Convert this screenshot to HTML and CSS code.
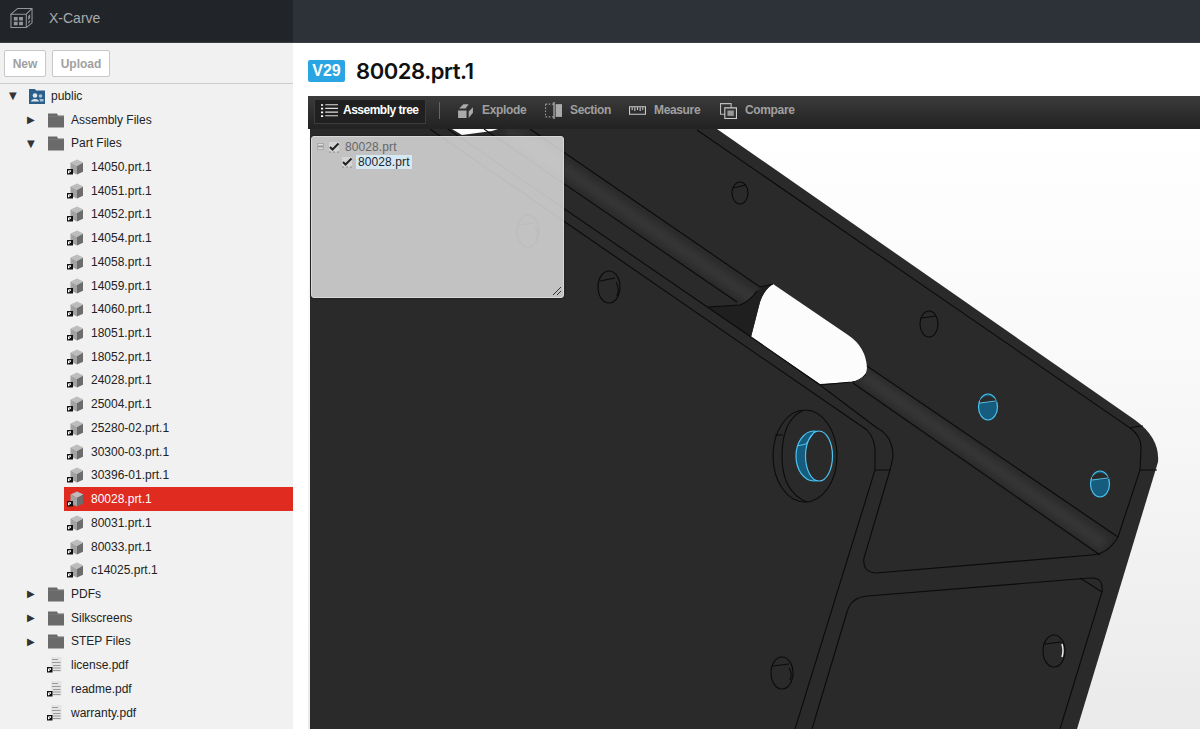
FILE: index.html
```html
<!DOCTYPE html>
<html lang="en">
<head>
<meta charset="UTF-8">
<meta name="viewport" content="width=device-width, initial-scale=1.0">
<title>X-Carve — 80028.prt.1</title>
<link rel="stylesheet" href="styles.css">
</head>
<body>
  <svg class="defs" width="0" height="0">
    <symbol id="part" viewBox="0 0 16 16">
      <path d="M3.500 3.500 10 .5 16.500 3.500 10 7Z" fill="#bdbdbd"/>
      <path d="M3.500 3.500 10 7V15.500L3.500 12.500Z" fill="#a2a2a2"/>
      <path d="M16.500 3.500 10 7V15.500L16.500 12.500Z" fill="#6c6c6c"/>
      <path d="M0 10H6V15.500H0Z" fill="#111"/>
      <path d="M1.500 14V11.800H4M1.500 14 4 11.800" fill="none" stroke="#fff"/>
    </symbol>
    <symbol id="folder" viewBox="0 0 16 16">
      <path d="M0 1.500H9L10 3.500H16V15.500H0Z" fill="#6a6a6a"/>
      <path d="M0 4.500H16V5H0Z" fill="#808080"/>
    </symbol>
    <symbol id="doc" viewBox="0 0 16 16">
      <path d="M4 0H14.500V15H4Z" fill="#e4e4e4"/>
      <path d="M5 2.500H11M5 5.500H13.500M6 8.500H13.500M6 11H13.500M6 13.500H13.500" stroke="#9a9a9a" stroke-width="1.200"/>
      <path d="M0 10H5.500V15.500H0Z" fill="#111"/>
      <path d="M1.500 14V11.800H4M1.500 14 4 11.800" fill="none" stroke="#fff"/>
    </symbol>
    <symbol id="tick" viewBox="0 0 12 12">
      <path d="M1 1H11V11H1Z" fill="#e6e6e6" opacity=".55"/>
      <path d="M1 11H3M5 11H7M9 11H11" stroke="#888"/>
      <path d="M2 6 4.500 8.500 10.500 2.500" fill="none" stroke="#222" stroke-width="2"/>
    </symbol>
  </svg>

  <header class="topbar">
    <div class="brand">
      <svg class="brand-icon" viewBox="0 1.500 24 21">
        <path d="M1 8V22H17V8H1L8 2H23V17L17 22M17 8 23 2" fill="none" stroke="#93969a" stroke-width="1.100"/>
        <path d="M4 11H8V14.500H4ZM9.500 11H13.500V14.500H9.500ZM4 16H8V19.500H4ZM9.500 16H13.500V19.500H9.500Z" fill="#93969a"/>
        <path d="M19 10 21 8V12L19 14ZM19 16 21 14V16L19 18Z" fill="#93969a"/>
      </svg>
      <span>X-Carve</span>
    </div>
  </header>

  <div class="layout">
    <aside class="sidebar">
      <div class="side-actions">
        <button class="btn btn-new">New</button>
        <button class="btn">Upload</button>
      </div>
      <ul class="tree">
        <li class="row lvl0"><span class="arrow">▼</span>
          <svg class="ico pub" viewBox="0 0 16 16"><path d="M0 1H6L7 2.500H16V16H0Z" fill="#2c5e8c"/><circle cx="6" cy="7.500" r="2.300" fill="#dfe8f0"/><path d="M2 13.500C2 10 10 10 10 13.500Z" fill="#dfe8f0"/><circle cx="11.500" cy="8" r="1.800" fill="#a9c1d6"/><path d="M10.500 11H14.500V13.500H11Z" fill="#a9c1d6"/></svg>
          <span class="name">public</span></li>
        <li class="row lvl1"><span class="arrow">▶</span><svg class="ico"><use href="#folder"/></svg><span class="name">Assembly Files</span></li>
        <li class="row lvl1"><span class="arrow">▼</span><svg class="ico"><use href="#folder"/></svg><span class="name">Part Files</span></li>
        <li class="row lvl2"><svg class="ico"><use href="#part"/></svg><span class="name">14050.prt.1</span></li>
        <li class="row lvl2"><svg class="ico"><use href="#part"/></svg><span class="name">14051.prt.1</span></li>
        <li class="row lvl2"><svg class="ico"><use href="#part"/></svg><span class="name">14052.prt.1</span></li>
        <li class="row lvl2"><svg class="ico"><use href="#part"/></svg><span class="name">14054.prt.1</span></li>
        <li class="row lvl2"><svg class="ico"><use href="#part"/></svg><span class="name">14058.prt.1</span></li>
        <li class="row lvl2"><svg class="ico"><use href="#part"/></svg><span class="name">14059.prt.1</span></li>
        <li class="row lvl2"><svg class="ico"><use href="#part"/></svg><span class="name">14060.prt.1</span></li>
        <li class="row lvl2"><svg class="ico"><use href="#part"/></svg><span class="name">18051.prt.1</span></li>
        <li class="row lvl2"><svg class="ico"><use href="#part"/></svg><span class="name">18052.prt.1</span></li>
        <li class="row lvl2"><svg class="ico"><use href="#part"/></svg><span class="name">24028.prt.1</span></li>
        <li class="row lvl2"><svg class="ico"><use href="#part"/></svg><span class="name">25004.prt.1</span></li>
        <li class="row lvl2"><svg class="ico"><use href="#part"/></svg><span class="name">25280-02.prt.1</span></li>
        <li class="row lvl2"><svg class="ico"><use href="#part"/></svg><span class="name">30300-03.prt.1</span></li>
        <li class="row lvl2"><svg class="ico"><use href="#part"/></svg><span class="name">30396-01.prt.1</span></li>
        <li class="row lvl2 selected"><svg class="ico"><use href="#part"/></svg><span class="name">80028.prt.1</span></li>
        <li class="row lvl2"><svg class="ico"><use href="#part"/></svg><span class="name">80031.prt.1</span></li>
        <li class="row lvl2"><svg class="ico"><use href="#part"/></svg><span class="name">80033.prt.1</span></li>
        <li class="row lvl2"><svg class="ico"><use href="#part"/></svg><span class="name">c14025.prt.1</span></li>
        <li class="row lvl1"><span class="arrow">▶</span><svg class="ico"><use href="#folder"/></svg><span class="name">PDFs</span></li>
        <li class="row lvl1"><span class="arrow">▶</span><svg class="ico"><use href="#folder"/></svg><span class="name">Silkscreens</span></li>
        <li class="row lvl1"><span class="arrow">▶</span><svg class="ico"><use href="#folder"/></svg><span class="name">STEP Files</span></li>
        <li class="row lvl1 file"><svg class="ico"><use href="#doc"/></svg><span class="name">license.pdf</span></li>
        <li class="row lvl1 file"><svg class="ico"><use href="#doc"/></svg><span class="name">readme.pdf</span></li>
        <li class="row lvl1 file"><svg class="ico"><use href="#doc"/></svg><span class="name">warranty.pdf</span></li>
      </ul>
    </aside>

    <main class="main">
      <div class="title-row">
        <span class="version">V29</span>
        <h1>80028.prt.1</h1>
      </div>

      <section class="viewer">
        <div class="tools">
          <div class="tool active">
            <svg viewBox="0 0 16 16"><path d="M4 2.500H16M4 6H16M4 9.500H16M4 13H16" stroke="#ddd"/><path d="M0 2H2V3.500H0ZM0 5.500H2V7H0ZM0 9H2V10.500H0ZM0 12.500H2V14H0Z" fill="#fff"/></svg>
            Assembly tree
          </div>
          <span class="tool-sep"></span>
          <div class="tool explode">
            <svg viewBox="0 0 16 16"><path d="M1 8H9V15H1ZM2 6 6 2H11L8 6ZM11 9 15 5V10L11 15Z" fill="#aaa"/></svg>
            Explode
          </div>
          <div class="tool section">
            <svg viewBox="0 0 16 16"><path d="M.5 2H8M.5 14H8M.5 2V14" fill="none" stroke="#999" stroke-dasharray="1.500 1.500"/><path d="M8.500 0V16" stroke="#ccc"/><path d="M10 2H16V14H10Z" fill="#aaa"/></svg>
            Section
          </div>
          <div class="tool measure">
            <svg viewBox="0 0 16 16"><path d="M.5 4.500H15.500V11.500H.5Z" fill="none" stroke="#ccc"/><path d="M3 5V7.500M5.500 5V8.500M8 5V7.500M10.500 5V8.500M13 5V7.500" stroke="#ccc"/></svg>
            Measure
          </div>
          <div class="tool compare">
            <svg viewBox="0 0 16 16"><path d="M.5 1.500H10.500V11.500H.5Z" fill="none" stroke="#bbb"/><path d="M4.500 5.500H15.500V15.500H4.500Z" fill="#333" stroke="#ccc"/><path d="M7 8H13V13H7Z" fill="#999"/></svg>
            Compare
          </div>
        </div>

        <div class="canvas">
          <svg class="model" viewBox="308 129 892 600" width="892" height="600">
            <defs>
              <linearGradient id="sky" x1="0" y1="0" x2="0" y2="1">
                <stop offset="0" stop-color="#fff"/>
                <stop offset=".45" stop-color="#f8f8f8"/>
                <stop offset="1" stop-color="#eaeaea"/>
              </linearGradient>
              <filter id="soft" x="-20%" y="-20%" width="140%" height="140%"><feGaussianBlur stdDeviation="3"/></filter>
            </defs>
            <rect class="sky" x="308" y="129" width="892" height="600"/>
            <path class="body" d="M310 129H717L1135 420Q1160 438 1158 462L1077 729H310Z"/>
            <path class="sliver" d="M452 129H498L492 131 462 135Z"/>

            <path class="glow" d="M507 129 755 300M862 375 1105 545"/>
            <path class="slot" d="M773 284 848 335Q866 347 867 368Q866 380 852 382L820 384 751 337 760 302Q764 290 773 284Z"/>
            <path class="wedge" d="M708 307 740 305Q750 301 757 291Q764 285 773 284Q764 290 760 302L751 337Z"/>

            <path class="edge" d="M697 130 1130 428Q1137 426 1143 426"/>
            <path class="edge" d="M530 129 760 287Q765 286 773 284M867 366 1118 537"/>
            <path class="edge" d="M484 129 737 302M708 307 740 305Q750 301 757 291M853 383 1100 555"/>
            <path class="edge" d="M448 129 751 337 820 385 877 428"/>
            <path class="edge" d="M430 129 867 430"/>
            <path class="edge" d="M820 385 852 382Q860 381 866 374"/>
            <path class="edge" d="M877 428Q893 436 893 457L890 470 864 558Q862 572 876 573L1092 555Q1108 554 1118 537L1140 470 1157 470"/>
            <path class="edge" d="M867 430Q876 440 875 455L875 470 795 729"/>
            <path class="edge" d="M875 470H890M1130 428Q1142 436 1141 450L1140 470"/>
            <path class="edge" d="M812 729 847 612Q851 597 868 596L1090 578Q1104 577 1102 592L1060 729"/>
            <path class="edge" d="M1080 578 1102 592"/>

            <!-- plain holes -->
            <ellipse class="hole" cx="740" cy="193" rx="8" ry="11"/><path class="edge" d="M733 188 746 185"/>
            <ellipse class="hole" cx="609" cy="287" rx="11" ry="16"/><path class="edge" d="M600 281 615 278M616 282Q620 289 617 296"/>
            <ellipse class="hole" cx="929" cy="324" rx="9" ry="13"/><path class="edge" d="M921 318 936 316"/>
            <ellipse class="hole" cx="1054" cy="651" rx="11" ry="16"/><path class="edge" d="M1045 644 1061 642"/>
            <path class="glint" d="M1062 644Q1064 651 1062 657"/>
            <ellipse class="hole" cx="782" cy="673" rx="11" ry="16"/><path class="edge" d="M773 666 789 664M789 668Q793 674 790 680"/>
            <ellipse class="hole" cx="528" cy="231" rx="11" ry="16"/><path class="edge" d="M519 225 534 223M535 226Q539 232 536 240"/>

            <!-- counterbore -->
            <ellipse class="hole" cx="805" cy="456" rx="32" ry="46"/>
            <path class="edge" d="M803 410.500Q782 420 782 456Q782 492 807 502M775 435H783"/>

            <!-- highlighted holes -->
            <ellipse class="blue" cx="814" cy="456" rx="18" ry="25"/>
            <ellipse class="bore" cx="819" cy="456" rx="13.500" ry="25"/>
            <path class="blue-line" d="M797 446 806 444 815 431"/>
            <ellipse class="blue" cx="988" cy="407" rx="9.500" ry="13"/>
            <path class="blue-cap" d="M980 400Q988 392 996 400L997 402 980 403Z"/>
            <path class="blue-line" d="M980 403 996 401"/>
            <ellipse class="blue" cx="1100" cy="484" rx="9.500" ry="13"/>
            <path class="blue-cap" d="M1092 477Q1100 469 1108 477L1109 479 1092 480Z"/>
            <path class="blue-line" d="M1092 480 1108 478"/>
          </svg>

          <div class="asm-panel">
            <div class="asm-row parent">
              <span class="minus"></span>
              <svg class="tick"><use href="#tick"/></svg>
              <span>80028.prt</span>
            </div>
            <div class="asm-row child">
              <svg class="tick"><use href="#tick"/></svg>
              <span class="picked">80028.prt</span>
            </div>
            <svg class="grip" viewBox="0 0 8 8"><path d="M0 8 8 0M4 8 8 4" stroke="#333"/></svg>
          </div>
        </div>
      </section>
    </main>
  </div>
</body>
</html>
```
FILE: styles.css
```css
* { margin:0; padding:0; box-sizing:border-box; }
html, body { height:100%; overflow:hidden; }
body { font-family:"Liberation Sans", Arial, sans-serif; font-size:12px; background:#fff; color:#1a1a2e; display:flex; flex-direction:column; }
.defs { position:absolute; }

.topbar { height:43px; flex-shrink:0; background:#2d3238; border-bottom:1px solid #3b3e42; }
.brand { width:293px; height:42px; background:#212429; display:flex; align-items:center; padding-left:10px; gap:16px; color:#a9abad; font-size:14px; }
.brand-icon { width:23px; height:24px; margin-top:-6px; }
.brand span { margin-top:-6px; }

.layout { flex:1; display:flex; min-height:0; }
.sidebar { width:293px; flex-shrink:0; background:#f1f1f1; overflow:hidden; }
.side-actions { height:41px; display:flex; gap:6px; padding:7px 0 0 4px; border-bottom:1px solid #ccc; }
.btn { height:27px; width:58px; background:#fff; border:1px solid #c8c8c8; border-radius:2px; color:#a0a0a0; font:bold 12px "Liberation Sans", Arial, sans-serif; }
.btn-new { width:42px; }

.tree { list-style:none; }
.row { height:23.73px; display:flex; align-items:center; position:relative; color:#222; }
.arrow { width:12px; font-size:10px; color:#333; font-family:"DejaVu Sans", sans-serif; }
.ico { width:16px; height:16px; flex-shrink:0; overflow:visible; }
.name { white-space:nowrap; }
.lvl0 { padding-left:9px; }
.lvl0 .arrow { margin-right:8px; }
.lvl0 .name { margin-left:6px; }
.lvl1 { padding-left:27px; }
.lvl1 .arrow { margin-right:9px; }
.lvl1 .name { margin-left:7px; }
.lvl1.file { padding-left:47px; }
.lvl1.file .name { margin-left:8px; }
.lvl2 { padding-left:67px; }
.lvl2 .name { margin-left:8px; }
.selected { margin-left:64px; padding-left:3px; background:#e02b20; color:#fff; }

.main { flex:1; min-width:0; display:flex; flex-direction:column; padding-left:15px; background:#fff; }
.title-row { height:53px; display:flex; align-items:center; gap:11px; flex-shrink:0; }
.version { width:37px; height:22px; background:#2aa5e4; border-radius:2px; color:#fff; font-weight:bold; font-size:16px; line-height:22px; text-align:center; margin-top:3px; }
h1 { font-family:Inter, "Noto Sans", sans-serif; font-size:22px; font-weight:600; letter-spacing:-.45px; color:#111; margin-top:3px; }

.viewer { flex:1; display:flex; flex-direction:column; min-height:0; }
.tools { height:33px; flex-shrink:0; display:flex; align-items:center; background:linear-gradient(#3c3c3c, #2b2b2b 60%, #222); padding:0 0 5px 6px; color:#a0a0a0; font-weight:bold; letter-spacing:-.35px; }
.tool { display:flex; align-items:center; gap:8px; white-space:nowrap; }
.tool svg { width:17px; height:17px; }
.tool.active { width:112px; height:25px; margin-top:3px; padding:0 0 3px 6px; gap:5px; color:#fff; background:#202020; border:1px solid #3c3c3c; letter-spacing:-.5px; }
.tool-sep { width:1px; height:17px; background:#666; margin:0 17px 0 13px; }
.explode { width:88px; }
.section { width:84px; }
.measure { width:91px; }
.compare { width:90px; }

.canvas { flex:1; position:relative; overflow:hidden; }
.model { display:block; }
.sky { fill:url(#sky); }
.body { fill:#2a2a2a; }
.sliver, .slot { fill:#fcfcfc; }
.wedge { fill:#1f1f1f; }
.glow { fill:none; stroke:#343434; stroke-width:14; filter:url(#soft); }
.edge { fill:none; stroke:#0b0b0b; stroke-width:1.100; }
.hole { fill:#2a2a2a; stroke:#0b0b0b; stroke-width:1.100; }
.glint { fill:none; stroke:#eee; stroke-width:1.500; }
.blue { fill:#155c7e; stroke:#4cc4f2; stroke-width:1.200; }
.bore { fill:#2a2a2a; stroke:#4cc4f2; stroke-width:1.200; }
.blue-cap { fill:#2a2a2a; }
.blue-line { fill:none; stroke:#4cc4f2; stroke-width:1; }

.asm-panel { position:absolute; left:3px; top:7px; width:253px; height:162px; background:rgba(233,233,233,.8); border:1px solid #d8d8d8; border-radius:3px; padding:2px 5px; box-shadow:0 0 2px rgba(0,0,0,.5); }
.asm-row { height:15.500px; display:flex; align-items:center; gap:4px; letter-spacing:.1px; }
.parent { color:#666; }
.parent .tick { margin-right:1px; }
.child { padding-left:24px; color:#1a2630; gap:3px; }
.minus { width:7px; height:7px; border:1px solid #aaa; background:linear-gradient(#eee, #999 50%, #eee); }
.tick { width:12px; height:12px; }
.picked { background:#d6e8f2; padding:0 2px; }
.grip { position:absolute; right:2px; bottom:2px; width:8px; height:8px; }
```
